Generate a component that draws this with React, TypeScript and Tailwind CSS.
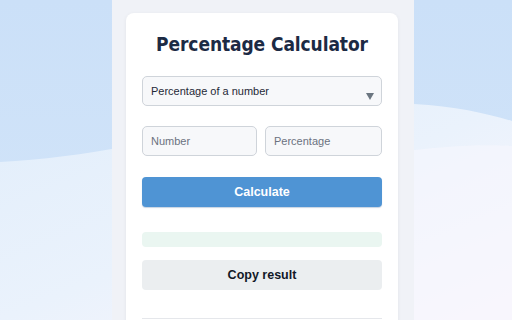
import { useState } from 'react'

function Backdrop() {
  return (
    <svg
      className="absolute inset-0 h-full w-full"
      viewBox="0 0 512 320"
      preserveAspectRatio="none"
      aria-hidden="true"
    >
      <defs>
        <linearGradient id="sky" x1="0" y1="0" x2="0" y2="1">
          <stop offset="0" stopColor="#cbe0f8" />
          <stop offset="1" stopColor="#d3e5f9" />
        </linearGradient>
        <linearGradient id="hill" x1="0" y1="0" x2="1" y2="1">
          <stop offset="0" stopColor="#e2eefb" />
          <stop offset="0.5" stopColor="#eaf2fc" />
          <stop offset="1" stopColor="#fbf6fd" />
        </linearGradient>
      </defs>
      <rect width="512" height="320" fill="url(#sky)" />
      <path
        d="M0,162 C140,156 300,100 414,104 C455,106 488,114 512,121 L512,320 L0,320 Z"
        fill="url(#hill)"
      />
      <path
        d="M414,150 C450,146 485,144 512,146 L512,320 L414,320 Z"
        fill="#f7f6fd"
        opacity="0.6"
      />
    </svg>
  )
}

export default function App() {
  const [mode, setMode] = useState('of')
  const [num, setNum] = useState('')
  const [pct, setPct] = useState('')
  const [result, setResult] = useState('')

  const calculate = () => {
    const a = parseFloat(num)
    const b = parseFloat(pct)
    if (isNaN(a) || isNaN(b)) return
    setResult(mode === 'of' ? String((a * b) / 100) : '')
  }

  return (
    <div className="relative h-[320px] w-[512px] overflow-hidden font-['Liberation_Sans',Arial,sans-serif]">
      <Backdrop />
      <div className="relative ml-[112px] h-full w-[302px] bg-[#f0f2f7] pt-[13px] pr-4 pl-[14px]">
        <div className="h-[340px] rounded-[8px] bg-white px-4 pt-[17px] shadow-[0_1px_4px_rgba(15,23,42,0.06)]">
          <h1 className="text-center font-['DejaVu_Sans_Condensed','DejaVu_Sans',sans-serif] text-[19px] leading-[28px] font-bold tracking-[-0.1px] text-[#1c2a44]">
            Percentage Calculator
          </h1>

          <div className="relative mt-[18px]">
            <select
              value={mode}
              onChange={(e) => setMode(e.target.value)}
              className="h-[30px] w-full appearance-none rounded-[5px] border border-[#cfd4da] bg-[#f7f8fa] pl-[8px] text-[11px] text-[#1f2937] outline-none"
            >
              <option value="of">Percentage of a number</option>
              <option value="is">What percent is X of Y</option>
              <option value="change">Percentage change</option>
            </select>
            <svg
              className="pointer-events-none absolute top-[17px] right-[8px]"
              width="8"
              height="7"
              viewBox="0 0 8 7"
            >
              <path d="M0,0 L8,0 L4,7 Z" fill="#6b7680" />
            </svg>
          </div>

          <div className="mt-5 flex gap-2">
            <input
              value={num}
              onChange={(e) => setNum(e.target.value)}
              placeholder="Number"
              className="h-[30px] w-[115px] rounded-[5px] border border-[#cfd4da] bg-[#f7f8fa] px-[8px] text-[11px] text-[#1f2937] outline-none placeholder:text-[#6b7280]"
            />
            <input
              value={pct}
              onChange={(e) => setPct(e.target.value)}
              placeholder="Percentage"
              className="h-[30px] min-w-0 flex-1 rounded-[5px] border border-[#cfd4da] bg-[#f7f8fa] px-[8px] text-[11px] text-[#1f2937] outline-none placeholder:text-[#6b7280]"
            />
          </div>

          <button
            onClick={calculate}
            className="mt-[21px] h-[30px] w-full rounded-[4px] bg-[#4f94d4] text-[12.5px] font-bold text-white shadow-[0_1px_1px_rgba(30,80,140,0.25)]"
          >
            Calculate
          </button>

          <div className="mt-[25px] h-[15px] rounded-[4px] bg-[#eaf6f1] text-[11px] leading-[15px] text-[#1f2937]">
            {result}
          </div>

          <button className="mt-[13px] h-[30px] w-full rounded-[4px] bg-[#ebeef0] text-[12.5px] font-bold text-[#111827]">
            Copy result
          </button>

          <div className="mt-[28px] border-t border-[#e5e7eb]" />
        </div>
      </div>
    </div>
  )
}
